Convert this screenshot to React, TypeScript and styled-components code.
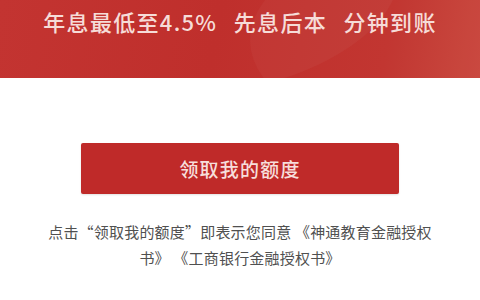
import React from "react";
import styled, { createGlobalStyle } from "styled-components";

const Global = createGlobalStyle`
  html, body { margin: 0; padding: 0; background: #fff; }
  body { width: 480px; height: 300px; overflow: hidden; font-family: "Noto Sans CJK SC", "Noto Sans", sans-serif; }
`;

const Page = styled.div`
  width: 480px;
  height: 300px;
  display: flex;
  flex-direction: column;
  background: #fff;
`;

const Banner = styled.header`
  position: relative;
  height: 78px;
  overflow: hidden;
  background: linear-gradient(100deg, #c12d2a 0%, #bd2825 45%, #c0302b 80%, #c9443a 100%);
  display: flex;
  justify-content: center;
  align-items: flex-start;
  padding-top: 5px;
  box-sizing: border-box;
`;

const Swirl = styled.div`
  position: absolute;
  border-radius: 50%;
  pointer-events: none;
`;

const BannerText = styled.div`
  position: relative;
  color: #f6dcd8;
  font-size: 22px;
  font-weight: 500;
  line-height: 32px;
  letter-spacing: 1.3px;
  word-spacing: 2px;
  white-space: pre;
  font-family: "Noto Sans CJK SC", sans-serif;
`;

const Body = styled.main`
  display: flex;
  flex-direction: column;
  align-items: center;
  padding-top: 65px;
`;

const ClaimButton = styled.button`
  width: 318px;
  height: 51px;
  border: none;
  border-radius: 2px;
  background: #bf2a29;
  color: #f7dedb;
  font-size: 19px;
  font-weight: 500;
  letter-spacing: 1.2px;
  font-family: "Noto Sans CJK SC", sans-serif;
  box-shadow: 0 1px 2px rgba(0,0,0,0.12);
  cursor: pointer;
`;

const Notice = styled.p`
  margin: 25px 0 0;
  width: 400px;
  text-align: center;
  color: #505050;
  font-size: 15px;
  letter-spacing: 0.2px;
  line-height: 26px;
  font-family: "Noto Sans CJK SC", sans-serif;
`;

export default function App() {
  return (
    <>
      <Global />
      <Page>
        <Banner>
          <Swirl style={{ left: -120, top: -160, width: 520, height: 260, background: "rgba(255,255,255,0.035)" }} />
          <Swirl style={{ left: 250, top: -60, width: 360, height: 200, background: "rgba(255,255,255,0.03)" }} />
          <BannerText>{"年息最低至4.5%  先息后本  分钟到账"}</BannerText>
        </Banner>
        <Body>
          <ClaimButton>领取我的额度</ClaimButton>
          <Notice>点击“领取我的额度”即表示您同意 《神通教育金融授权书》 《工商银行金融授权书》</Notice>
        </Body>
      </Page>
    </>
  );
}
